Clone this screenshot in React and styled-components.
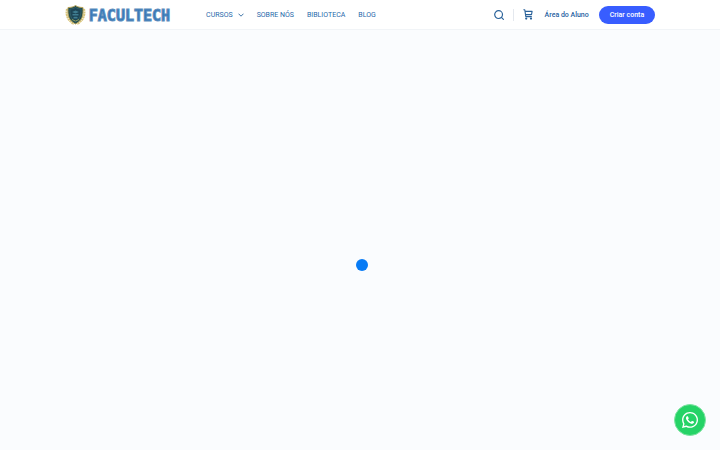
import React from 'react';
import styled, { createGlobalStyle } from 'styled-components';

const GlobalStyle = createGlobalStyle`
* {
box-sizing: border-box;
}
body {
margin: 0;
background-color: #fafcfe;
font-family: Roboto, sans-serif;
}
`;

const Page = styled.div`
display: flex;
flex-direction: column;
min-height: 100vh;
`;

const Header = styled.header`
display: flex;
align-items: center;
height: 30px;
padding: 0 9%;
background-color: #fff;
border-bottom: 1px solid #f1f4f7;
`;

const Logo = styled.a`
display: flex;
align-items: center;
gap: 3px;
margin-right: 36px;
text-decoration: none;
`;

const LogoText = styled.span`
color: #3476b8;
font-family: "DejaVu Sans Mono", monospace;
font-size: 15px;
font-weight: bold;
line-height: 18px;
padding-top: 2px;
-webkit-text-stroke: 1px #5b8dbd;
`;

const Nav = styled.nav`
display: flex;
align-items: center;
gap: 13px;
`;

const NavLink = styled.a`
display: flex;
align-items: center;
gap: 5px;
color: #1f68aa;
font-size: 7px;
line-height: 10px;
text-decoration: none;
text-transform: uppercase;
`;

const Actions = styled.div`
display: flex;
align-items: center;
margin-left: auto;
`;

const IconButton = styled.button`
display: flex;
padding: 0;
border: none;
background: none;
color: #2a629a;
cursor: pointer;
`;

const Divider = styled.span`
width: 1px;
height: 12px;
margin: 0 9px;
background-color: #e4e8ee;
`;

const LoginLink = styled.a`
margin: 0 10px 0 12px;
color: #1f619f;
font-size: 7px;
font-weight: 500;
line-height: 10px;
text-decoration: none;
`;

const SignUpButton = styled.button`
height: 18px;
padding: 0 11px;
border: none;
border-radius: 9px;
background-color: #385dff;
color: #fff;
font-family: inherit;
font-size: 7px;
font-weight: 500;
cursor: pointer;
`;

const Main = styled.main`
display: flex;
flex: 1;
align-items: center;
justify-content: center;
padding: 50px 0 0 4px;
`;

const Loader = styled.div`
width: 12px;
height: 12px;
border-radius: 50%;
background-color: #077bf5;
`;

// 화면 오른쪽 아래에 떠 있는 버튼
const WhatsAppButton = styled.a`
position: fixed;
right: 14px;
bottom: 14px;
display: flex;
align-items: center;
justify-content: center;
width: 32px;
height: 32px;
border: 1px solid #7ee3a2;
border-radius: 50%;
background-color: #25d366;
`;

const Shield = () => (
<svg width="21" height="20" viewBox="0 0 42 40" aria-hidden="true">
    <path d="M4 8C1 19 5 31 18 38M38 8c3 11-1 23-14 30" fill="none" stroke="#d9c57c" strokeWidth="4" strokeDasharray="4 1" />
    <path d="M21 1c4 3 9 4 15 4 1 16-1 26-15 33C7 31 5 21 6 5c6 0 11-1 15-4z" fill="#234b4d" stroke="#b9a65b" strokeWidth="2" />
    <path d="M21 5c3 2 7 3 11 3 0 12-2 20-11 26C12 28 10 20 10 8c4 0 8-1 11-3z" fill="#1d4555" stroke="#40717a" />
    <path d="M14 14l7-3 7 3-7 3zM15 18h12v3H15zM17 24c3-1 6-1 8 0v3h-8z" fill="#3f7d90" />
    <path d="M14 29l7 3 7-3" fill="none" stroke="#8b9a5b" strokeWidth="2" />
</svg>
);

const ChevronIcon = () => (
<svg width="6" height="4" viewBox="0 0 6 4" fill="none" stroke="#3f75a8" aria-hidden="true">
    <path d="M.5.7L3 3.2 5.5.7" />
</svg>
);

const SearchIcon = () => (
<svg width="10" height="10" viewBox="0 0 10 10" fill="none" stroke="currentColor" strokeWidth="1.2" strokeLinecap="round" aria-hidden="true">
    <circle cx="4.6" cy="4.6" r="3.9" />
    <path d="M7.4 7.4L9.4 9.4" />
</svg>
);

const CartIcon = () => (
<svg width="10" height="11" viewBox="0 0 10 11" fill="none" stroke="currentColor" strokeWidth="1.1" strokeLinejoin="round" aria-hidden="true">
    <path d="M.4.8h1.4l1 6.8h6M2.2 2.4h6.9L8.5 5.6H2.6" />
    <circle cx="3.2" cy="9.6" r="1.1" fill="currentColor" stroke="none" />
    <circle cx="8" cy="9.6" r="1.1" fill="currentColor" stroke="none" />
</svg>
);

const WhatsAppIcon = () => (
<svg width="16" height="16" viewBox="0 32 448 448" fill="#fff" aria-hidden="true">
    <path d="M380.9 97.1C339 55.1 283.2 32 223.9 32c-122.4 0-222 99.6-222 222 0 39.1 10.2 77.3 29.6 111L0 480l117.7-30.9c32.4 17.7 68.9 27 106.1 27h.1c122.3 0 224.1-99.6 224.1-222 0-59.3-25.2-115-67.1-157zm-157 341.6c-33.2 0-65.7-8.9-94-25.7l-6.7-4-69.8 18.3L72 359.2l-4.4-7c-18.5-29.4-28.2-63.3-28.2-98.2 0-101.7 82.8-184.5 184.6-184.5 49.3 0 95.6 19.2 130.4 54.1 34.8 34.9 56.2 81.2 56.1 130.5 0 101.8-84.9 184.6-186.6 184.6zm101.2-138.2c-5.5-2.8-32.8-16.2-37.9-18-5.1-1.9-8.8-2.8-12.5 2.8-3.7 5.6-14.3 18-17.6 21.8-3.2 3.7-6.5 4.2-12 1.4-32.6-16.3-54-29.1-75.5-66-5.7-9.8 5.7-9.1 16.3-30.3 1.8-3.7.9-6.9-.5-9.7-1.4-2.8-12.5-30.1-17.1-41.2-4.5-10.8-9.1-9.3-12.5-9.5-3.2-.2-6.9-.2-10.6-.2-3.7 0-9.7 1.4-14.8 6.9-5.1 5.6-19.4 19-19.4 46.3 0 27.3 19.9 53.7 22.6 57.4 2.8 3.7 39.1 59.7 94.8 83.8 35.2 15.2 49 16.5 66.6 13.9 10.7-1.6 32.8-13.4 37.4-26.4 4.6-13 4.6-24.1 3.2-26.4-1.3-2.5-5-3.9-10.5-6.6z" />
</svg>
);

const App = () => (
<>
    <GlobalStyle />
    <Page>
    <Header>
        <Logo href="#">
        <Shield />
        <LogoText>FACULTECH</LogoText>
        </Logo>
        <Nav>
        <NavLink href="#cursos">Cursos <ChevronIcon /></NavLink>
        <NavLink href="#sobre">Sobre nós</NavLink>
        <NavLink href="#biblioteca">Biblioteca</NavLink>
        <NavLink href="#blog">Blog</NavLink>
        </Nav>
        <Actions>
        <IconButton type="button" aria-label="Pesquisar"><SearchIcon /></IconButton>
        <Divider />
        <IconButton type="button" aria-label="Carrinho"><CartIcon /></IconButton>
        <LoginLink href="#aluno">Área do Aluno</LoginLink>
        <SignUpButton type="button">Criar conta</SignUpButton>
        </Actions>
    </Header>
    <Main>
        <Loader role="status" aria-label="Carregando" />
    </Main>
    </Page>
    <WhatsAppButton href="#whatsapp" aria-label="WhatsApp"><WhatsAppIcon /></WhatsAppButton>
</>
);

export default App;
